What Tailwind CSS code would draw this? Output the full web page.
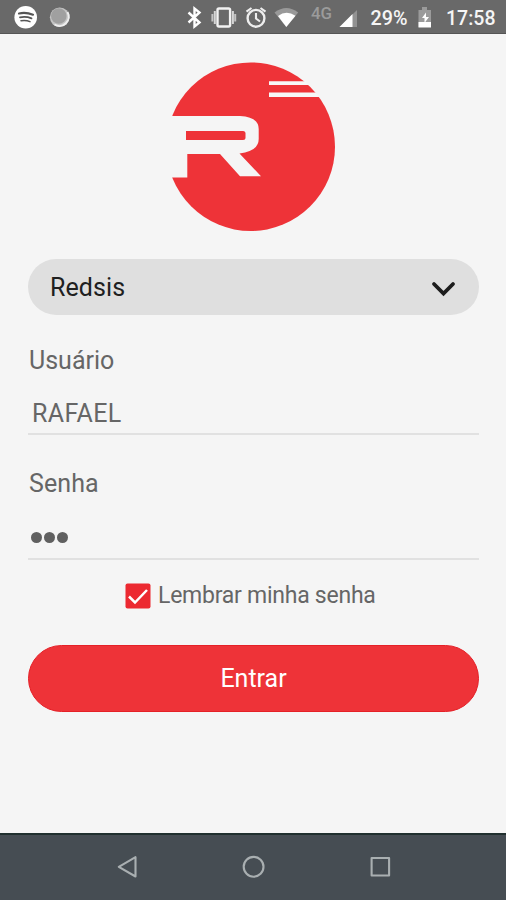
<!DOCTYPE html>
<html lang="pt-BR">
<head>
<meta charset="utf-8">
<title>Redsis</title>
<script src="https://cdn.jsdelivr.net/npm/@tailwindcss/browser@4"></script>
</head>
<body class="w-[506px] h-[900px] overflow-hidden bg-[#f5f5f5] font-['Roboto',sans-serif] flex flex-col text-[#666666]">
<header class="h-[34px] shrink-0 bg-[#696969] border-b border-[#555555]">
<svg class="block w-[506px] h-[33px]" viewBox="0 0 506 33" fill="none">
  <!-- music notification -->
  <circle cx="25.700" cy="17.200" r="11.300" fill="#fff"/>
  <g stroke="#555" stroke-linecap="round"><path d="M19 13.500q7-1.500 14 1.200" stroke-width="2.200"/><path d="M20 17.300q6-1.200 11.500 1" stroke-width="1.800"/><path d="M21 20.700q5-.8 9 .9" stroke-width="1.500"/></g>
  <circle cx="59.700" cy="17.200" r="9.800" fill="#c4c4c4"/>
  <path d="M67.500 12a9.300 9.300 0 0 1-13 12.500" stroke="#eee" stroke-width="2"/>
  <circle cx="58.800" cy="16" r="7.800" fill="#a0a0a0"/>
  <!-- bluetooth -->
  <path d="M188.500 12.500 199.500 22.500 194.500 26.500V8.500L199.500 12.500 188.500 22.500" stroke="#fff" stroke-width="2.400"/>
  <!-- vibrate -->
  <rect x="217.500" y="8.500" width="12.600" height="18" rx="1.500" stroke="#f2f2f2" stroke-width="2.400"/>
  <path d="M214.800 11v13M232.900 11v13" stroke="#d5d5d5" stroke-width="2"/><path d="M212.400 14v7.500M235.200 14v7.500" stroke="#c4c4c4" stroke-width="2"/>
  <!-- alarm -->
  <circle cx="256" cy="18.300" r="8.400" stroke="#eee" stroke-width="2.400"/>
  <path d="M246.500 11.700 251.500 8M260.500 8 265.500 11.700M256 13v5.500l4 3" stroke="#eee" stroke-width="2.100"/>
  <!-- wifi -->
  <path d="M274.500 12.500Q286.300 3.500 298.200 12.500L286.300 27Z" fill="#999"/>
  <path d="M278 16Q286.300 9.500 295.500 15.800L286.300 27Z" fill="#fff"/>
  <text x="311" y="19" font-family="Roboto" font-size="16" font-weight="500" fill="#9b9b9b" textLength="21" lengthAdjust="spacingAndGlyphs">4G</text>
  <!-- signal -->
  <path d="M339.500 27 357 10V27Z" fill="#929292"/><path d="M339.500 27 352.500 14V27Z" fill="#fff"/>
  <text x="370.500" y="25" font-family="Roboto" font-size="19.500" font-weight="500" fill="#f5f5f5" textLength="37" lengthAdjust="spacingAndGlyphs">29%</text>
  <!-- battery -->
  <path d="M418.500 10h3.500V7h5v3h4v17h-12.500Z" fill="#9b9b9b"/><path d="M418.500 22h12.500v5.500h-12.500Z" fill="#fff"/><path d="M426 12.500l-4 5.500h2.500v5l4.500-6h-3Z" fill="#fff"/>
  <text x="446" y="25" font-family="Roboto" font-size="19.500" font-weight="500" fill="#f5f5f5" textLength="49.500">17:58</text>
</svg>
</header>
<main class="flex-1 px-[28px] flex flex-col">
  <svg class="block w-[170px] h-[170px] mt-[28px] ml-[138px] shrink-0" viewBox="166 62 170 170">
    <circle cx="250.700" cy="146.700" r="84.300" fill="#ee3338"/>
    <path d="M160 116H240Q258.700 117 258.700 129V139Q258.700 151 239.500 153.500L261 176.200H240L220 154H187.300V177.500H160Z" fill="#f5f5f5"/>
    <path d="M186 131H243Q245.500 131 245.500 133.500V137.500Q245.500 140 243 140H186Z" fill="#ee3338"/>
    <path d="M269 81.200H306L310 85H269ZM269 92.500H316L320 97H269Z" fill="#f7f7f7"/>
  </svg>
  <button class="mt-[27px] h-[56px] w-[451px] rounded-full bg-[#dfdfdf] pl-[22px] pr-[23px] flex items-center justify-between text-[25px] text-[#202020] shrink-0">
    <span class="mt-[2px] tracking-[0.1px]">Redsis</span>
    <svg class="w-[25px] h-[16px] mt-[3px]" viewBox="0 0 25 16" fill="none"><path d="M3 3l9.500 9.500L22 3" stroke="#1d1d1d" stroke-width="3.800" stroke-linecap="round"/></svg>
  </button>
  <label class="mt-[31px] h-[30px] leading-[30px] text-[25px] pl-px">Usuário</label>
  <div class="mt-[22px] h-[37px] w-[451px] border-b-2 border-[#e1e1e1] pl-[4px] pt-px text-[25px] leading-[30px] tracking-[0.35px]">RAFAEL</div>
  <label class="mt-[34px] h-[30px] leading-[30px] text-[25px] pl-px tracking-[0.1px]">Senha</label>
  <div class="mt-[24px] h-[37px] w-[451px] border-b-2 border-[#e1e1e1] pl-[3px] pt-[9px] flex gap-[1.500px]"><i class="size-[11.300px] rounded-full bg-[#606060]"></i><i class="size-[11.300px] rounded-full bg-[#606060]"></i><i class="size-[11.300px] rounded-full bg-[#606060]"></i></div>
  <div class="mt-[22px] ml-[97px] flex items-center h-[28px]">
    <svg class="w-[26px] h-[26px]" viewBox="0 0 26 26" fill="none"><rect x=".5" y=".5" width="25" height="25" rx="2" fill="#ec2931"/><path d="M4 13.500l6 6L22 7" stroke="#fff" stroke-width="2.500"/></svg>
    <span class="ml-[7px] mt-px text-[23px] tracking-[-0.25px] whitespace-nowrap">Lembrar minha senha</span>
  </div>
  <button class="mt-[35px] h-[67px] w-[451px] rounded-full bg-[#ee3338] border border-[#e52027] text-[25px] pt-px text-white shrink-0">Entrar</button>
</main>
<nav class="h-[67px] shrink-0 bg-[#464d53] border-t-2 border-[#21302f]">
  <svg class="block w-[506px] h-[65px]" viewBox="0 835 506 65" fill="none" stroke="#a9afb1" stroke-width="2.100" stroke-linejoin="round">
    <path d="M118.800 866.800 135.500 857.200V876.500Z"/><circle cx="253.600" cy="866.800" r="9.900"/><rect x="371.600" y="858" width="17.500" height="17.500"/>
  </svg>
</nav>
</body>
</html>
